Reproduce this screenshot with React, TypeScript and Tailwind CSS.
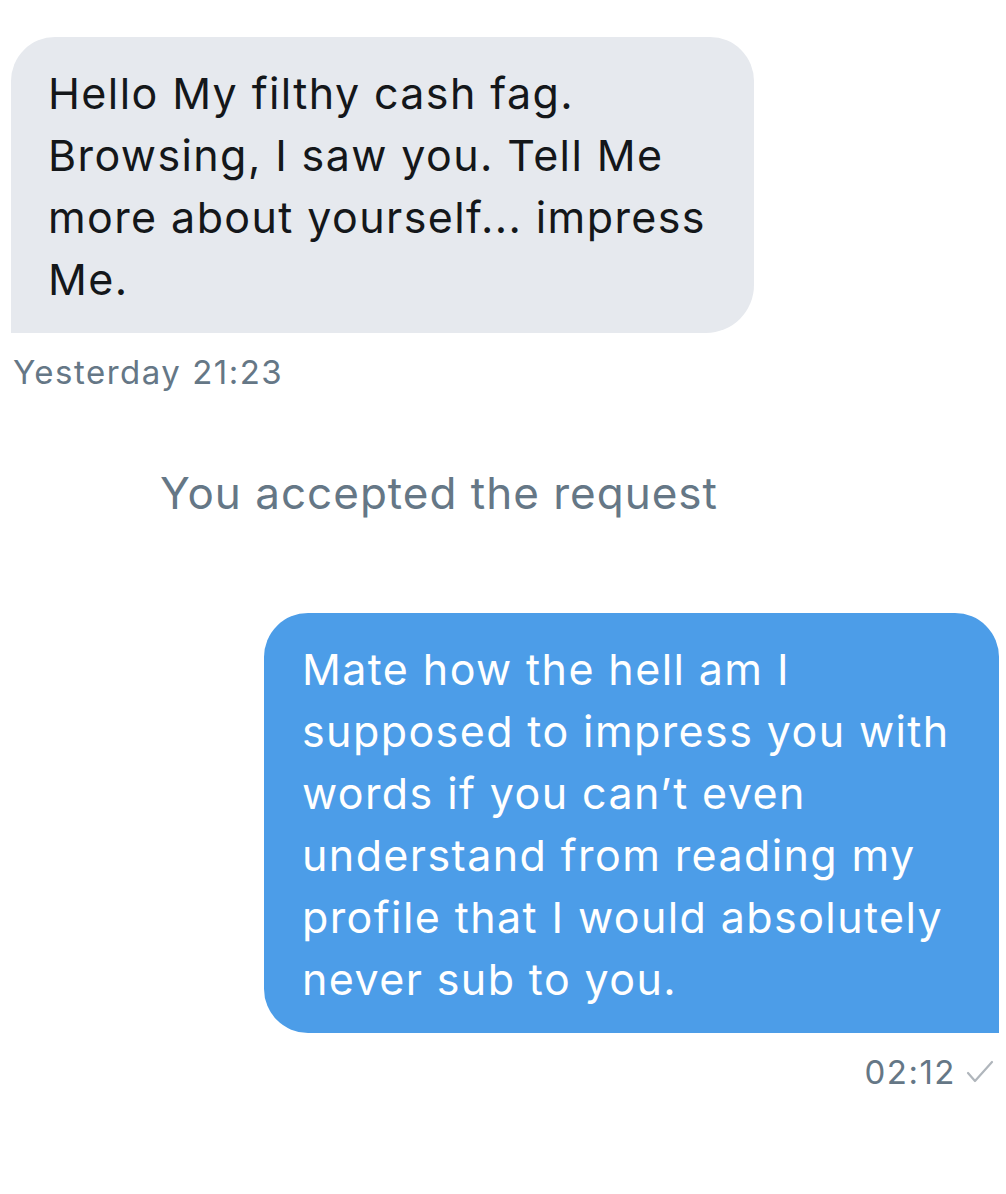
import React from "react";

export default function App() {
  return (
    <div
      className="w-[1006px] h-[1194px] bg-white overflow-hidden"
      style={{ fontFamily: "Inter, 'Noto Sans', sans-serif" }}
    >
      <div className="pt-[37px] pl-[11px]">
        <div className="w-[743px] bg-[#e6e9ee] rounded-tl-[44px] rounded-tr-[44px] rounded-br-[48px] pl-[37px] pr-[30px] pt-[25px] pb-[23px] text-[43px] leading-[62px] tracking-[1.4px] text-[#14171a]">
          Hello My filthy cash fag. Browsing, I saw you. Tell Me more about yourself... impress Me.
        </div>
        <div className="pl-[2px] mt-[20px] text-[33px] leading-[38px] tracking-[1.5px] text-[#657786]">
          Yesterday 21:23
        </div>
      </div>
      <div className="mt-[75px] pl-[160px] text-[44px] leading-[54px] tracking-[1px] text-[#657786]">
        You accepted the request
      </div>
      <div className="mt-[93px] flex justify-end pr-[7px]">
        <div className="w-[735px] bg-[#4c9de8] rounded-tl-[44px] rounded-tr-[44px] rounded-bl-[44px] pl-[38px] pr-[30px] pt-[25px] pb-[23px] text-[43px] leading-[62px] tracking-[1.4px] text-white">
          Mate how the hell am I supposed to impress you with words if you can’t even understand from reading my profile that I would absolutely never sub to you.
        </div>
      </div>
      <div className="mt-[20px] flex justify-end items-center pr-[12px] text-[33px] leading-[38px] tracking-[1.5px] text-[#657786]">
        <span>02:12</span>
        <svg className="ml-[10px]" width="28" height="26" viewBox="0 0 28 26" fill="none">
          <path d="M2 14 L9 22 L26 3" stroke="#b0b6bc" strokeWidth="2.2" strokeLinecap="round" strokeLinejoin="round" />
        </svg>
      </div>
    </div>
  );
}
